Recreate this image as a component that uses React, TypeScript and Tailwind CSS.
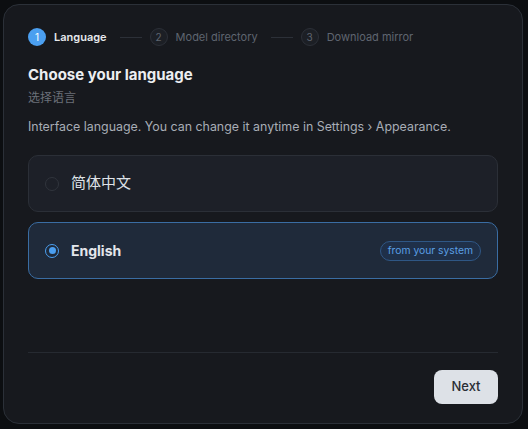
import React, { useState } from 'react';

type Lang = 'zh' | 'en';

const steps = [
  { n: 1, label: 'Language' },
  { n: 2, label: 'Model directory' },
  { n: 3, label: 'Download mirror' },
];

const Stepper: React.FC<{ current: number }> = ({ current }) => (
  <div className="flex items-center h-[18px]">
    {steps.map((s, i) => {
      const active = s.n === current;
      return (
        <React.Fragment key={s.n}>
          {i > 0 && <div className="w-[22px] h-px bg-[#2c3038] ml-[13px] mr-2" />}
          <div className="flex items-center gap-2">
            <span
              className={`w-[18px] h-[18px] rounded-full flex items-center justify-center text-[10px] leading-none ${
                active
                  ? 'bg-[#4b9ff0] text-white'
                  : 'bg-[#1c1f25] border border-[#2c3038] text-[#5f6570]'
              }`}
            >
              {s.n}
            </span>
            <span
              className={`text-[11px] ${
                active ? 'text-[#e6e8ec] font-semibold' : 'text-[#5f6570]'
              }`}
            >
              {s.label}
            </span>
          </div>
        </React.Fragment>
      );
    })}
  </div>
);

const Radio: React.FC<{ checked: boolean }> = ({ checked }) => (
  <span
    className={`w-[14px] h-[14px] rounded-full flex items-center justify-center shrink-0 ${
      checked ? 'border-[1.5px] border-[#4b9ff0]' : 'border border-[#30343c]'
    }`}
  >
    {checked && <span className="w-[7px] h-[7px] rounded-full bg-[#4b9ff0]" />}
  </span>
);

export default function App() {
  const [lang, setLang] = useState<Lang>('en');

  return (
    <div
      className="w-[528px] h-[429px] bg-[#0c0e11] pt-[4px] pl-[3px]"
      style={{ fontFamily: 'Inter, "Noto Sans CJK SC", sans-serif' }}
    >
      <div className="w-[520px] h-[420px] bg-[#17191e] border border-[#2b3038] rounded-[16px] pt-[23px] px-6 pb-[19px] flex flex-col">
        <Stepper current={1} />

        <h2 className="mt-[19px] text-[15px] leading-5 font-bold text-[#eceef1]">
          Choose your language
        </h2>
        <p className="mt-[5px] text-[12px] leading-4 text-[#6b7079]">选择语言</p>
        <p className="mt-3 text-[12.4px] leading-[18px] text-[#a8adb6]">
          Interface language. You can change it anytime in Settings › Appearance.
        </p>

        <div className="mt-[19px] flex flex-col gap-[10px]">
          <button
            onClick={() => setLang('zh')}
            className={`h-[57px] rounded-[10px] border flex items-center pl-4 pr-4 gap-3 text-left ${
              lang === 'zh' ? 'bg-[#1f2a3a] border-[#3a6da3]' : 'bg-[#1d2028] border-[#2b2f37]'
            }`}
          >
            <Radio checked={lang === 'zh'} />
            <span className="text-[15px] text-[#dfe2e7]">简体中文</span>
          </button>

          <button
            onClick={() => setLang('en')}
            className={`h-[57px] rounded-[10px] border flex items-center pl-4 pr-4 gap-3 text-left ${
              lang === 'en' ? 'bg-[#1f2a3a] border-[#3a6da3]' : 'bg-[#1d2028] border-[#2b2f37]'
            }`}
          >
            <Radio checked={lang === 'en'} />
            <span className="text-[14px] font-bold text-[#e3e6eb]">English</span>
            <span className="ml-auto h-5 px-[7px] rounded-full border border-[#2f5785] bg-[#1f3049] text-[10.3px] leading-none text-[#5a9fe4] flex items-center">
              from your system
            </span>
          </button>
        </div>

        <div className="flex-1" />

        <div className="border-t border-[#262a31] pt-[17px] flex justify-end">
          <button className="w-16 h-[34px] rounded-lg bg-[#dde1e7] text-[13px] font-medium text-[#2a2e35]">
            Next
          </button>
        </div>
      </div>
    </div>
  );
}
